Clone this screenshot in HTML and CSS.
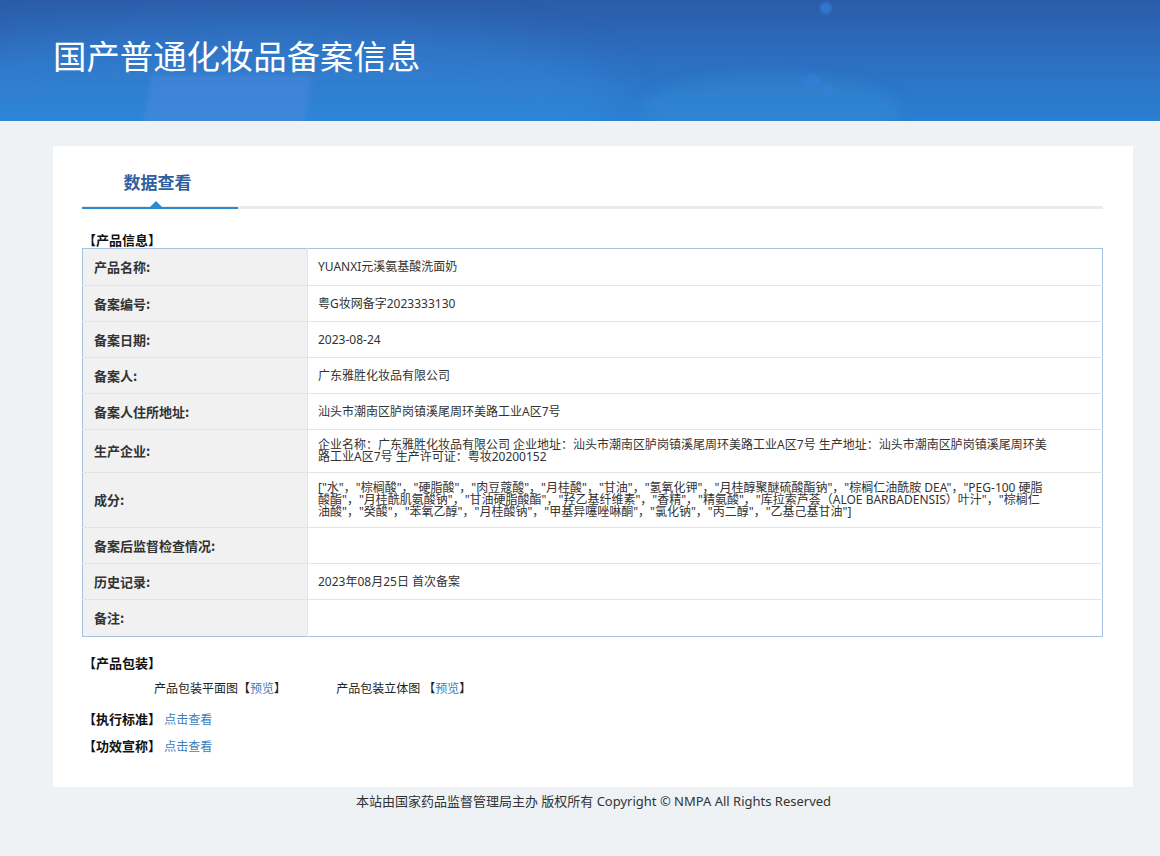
FILE: index.html
```html
<!DOCTYPE html>
<html lang="zh-CN">
<head>
    <meta charset="UTF-8">
    <meta name="viewport" content="width=device-width, initial-scale=1.0">
    <title>国产普通化妆品备案信息</title>
    <link rel="stylesheet" href="styles.css">
</head>
<body>
    <div class="banner">
        <div class="glow g1"></div>
        <div class="glow g2"></div>
        <div class="glow g3"></div>
        <div class="dot d1"></div>
        <div class="dot d2"></div>
        <div class="dot d3"></div>
        <h1>国产普通化妆品备案信息</h1>
    </div>

    <div class="card">
        <div class="tabs">
            <div class="tab active">数据查看</div>
        </div>

        <div class="sec-title">【产品信息】</div>
        <table class="info">
            <tr class="first">
                <th>产品名称:</th>
                <td>YUANXI元溪氨基酸洗面奶</td>
            </tr>
            <tr>
                <th>备案编号:</th>
                <td>粤G妆网备字2023333130</td>
            </tr>
            <tr>
                <th>备案日期:</th>
                <td>2023-08-24</td>
            </tr>
            <tr>
                <th>备案人:</th>
                <td>广东雅胜化妆品有限公司</td>
            </tr>
            <tr>
                <th>备案人住所地址:</th>
                <td>汕头市潮南区胪岗镇溪尾周环美路工业A区7号</td>
            </tr>
            <tr>
                <th>生产企业:</th>
                <td>企业名称：广东雅胜化妆品有限公司 企业地址：汕头市潮南区胪岗镇溪尾周环美路工业A区7号 生产地址：汕头市潮南区胪岗镇溪尾周环美路工业A区7号 生产许可证：粤妆20200152</td>
            </tr>
            <tr>
                <th>成分:</th>
                <td class="ingr">["水"，"棕榈酸"，"硬脂酸"，"肉豆蔻酸"，"月桂酸"，"甘油"，"氢氧化钾"，"月桂醇聚醚硫酸酯钠"，"棕榈仁油酰胺 DEA"，"PEG-100 硬脂酸酯"，"月桂酰肌氨酸钠"，"甘油硬脂酸酯"，"羟乙基纤维素"，"香精"，"精氨酸"，"库拉索芦荟（ALOE BARBADENSIS）叶汁"，"棕榈仁油酸"，"癸酸"，"苯氧乙醇"，"月桂酸钠"，"甲基异噻唑啉酮"，"氯化钠"，"丙二醇"，"乙基己基甘油"]</td>
            </tr>
            <tr>
                <th>备案后监督检查情况:</th>
                <td></td>
            </tr>
            <tr>
                <th>历史记录:</th>
                <td>2023年08月25日 首次备案</td>
            </tr>
            <tr>
                <th>备注:</th>
                <td></td>
            </tr>
        </table>

        <div class="extra">
            <div class="sec-title">【产品包装】</div>
            <div class="pack">
                <span class="pk">产品包装平面图【<a href="#">预览</a>】</span>
                <span class="pk">产品包装立体图 【<a href="#">预览</a>】</span>
            </div>
            <div class="line std"><b>【执行标准】</b> <a href="#">点击查看</a></div>
            <div class="line"><b>【功效宣称】</b> <a href="#">点击查看</a></div>
        </div>
    </div>

    <div class="footer">本站由国家药品监督管理局主办 版权所有 Copyright © NMPA All Rights Reserved</div>
</body>
</html>
```

FILE: styles.css
```css
*{
    margin:0;
    padding:0;
    box-sizing:border-box;
}
body{
    background:#eef2f5;
    font-family:"Noto Sans","Noto Sans CJK SC",sans-serif;
    color:#333;
    font-size:12px;
}
a{
    color:#3b7dbb;
    text-decoration:none;
}

/* banner */
.banner{
    position:relative;
    overflow:hidden;
    height:121px;
    background:linear-gradient(180deg,#2b5ca9 0%,#2d6dbf 45%,#2a80d1 100%);
    padding:34px 0 0 53px;
}
.banner h1{
    position:relative;
    color:#fff;
    font-family:"Noto Sans CJK SC",sans-serif;
    font-weight:400;
    font-size:33.4px;
    line-height:42px;
}
.glow{
    position:absolute;
    border-radius:50%;
}
.g1{
    left:-80px;
    top:20px;
    width:700px;
    height:160px;
    background:rgba(60,150,230,.25);
    filter:blur(20px);
}
.g2{
    left:145px;
    top:75px;
    width:160px;
    height:80px;
    border-radius:0;
    background:rgba(90,140,230,.35);
    transform:skewX(-10deg);
    filter:blur(2px);
}
.g3{
    left:640px;
    top:75px;
    width:260px;
    height:70px;
    background:rgba(60,150,220,.25);
    filter:blur(6px);
}
.dot{
    position:absolute;
    border-radius:50%;
    background:rgba(50,130,220,.7);
    filter:blur(1px);
}
.d1{left:820px;top:2px;width:12px;height:12px;}
.d2{left:805px;top:73px;width:16px;height:16px;background:rgba(50,130,220,.5);}
.d3{left:822px;top:84px;width:11px;height:11px;}

/* card */
.card{
    width:1080px;
    margin:25px 0 0 53px;
    background:#fff;
    padding:20px 30px 32px 29px;
}
.tabs{
    border-bottom:3px solid #ebebeb;
    height:43px;
}
.tab{
    position:relative;
    width:156px;
    height:43px;
    text-align:center;
    font-family:"Noto Sans CJK SC",sans-serif;
    font-size:17px;
    font-weight:700;
    color:#2f5f9f;
    line-height:32px;
    padding-right:5px;
    border-bottom:2px solid #2c8ad0;
    margin-bottom:-3px;
}
.tab::after{
    content:"";
    position:absolute;
    left:68px;
    bottom:0;
    border-left:6px solid transparent;
    border-right:6px solid transparent;
    border-bottom:6px solid #2c8ad0;
}

.sec-title{
    font-family:"Noto Sans CJK SC",sans-serif;
    font-weight:700;
    font-size:13px;
    color:#111;
    line-height:16px;
    margin:23px 0 0 1px;
}

/* info table */
.info{
    width:100%;
    border-collapse:collapse;
    border:1px solid #a6c2e0;
}
.info th,
.info td{
    border-bottom:1px solid #e4e4e4;
    padding:9px 10px;
    height:36px;
    vertical-align:middle;
    text-align:left;
}
.info tr:last-child th,
.info tr:last-child td{
    border-bottom:none;
    height:37px;
}
.info tr.first th,
.info tr.first td{
    height:37px;
}
.info th{
    width:225px;
    background:#f1f1f1;
    border-right:1px solid #e4e4e4;
    font-family:"Noto Sans CJK SC",sans-serif;
    font-size:13px;
    line-height:14px;
    font-weight:700;
    color:#333;
    padding-left:11px;
}
.info td{
    font-family:"Noto Sans","Noto Sans CJK SC",sans-serif;
    font-size:12px;
    line-height:12px;
    color:#333;
    padding-right:48px;
}
.info td.ingr{
    padding-right:56px;
}

/* packaging */
.extra .sec-title{
    margin-top:18px;
}
.pack{
    margin-top:10px;
    padding-left:72px;
    font-size:12px;
    line-height:16px;
    color:#222;
}
.pk{
    display:inline-block;
    width:179px;
}
.line{
    margin-top:10px;
    font-size:12px;
    line-height:16px;
}
.line.std{
    margin-top:14px;
}
.line b{
    font-family:"Noto Sans CJK SC",sans-serif;
    font-size:13px;
    color:#111;
    margin-left:1px;
}

.footer{
    text-align:center;
    font-size:13px;
    color:#333;
    line-height:28px;
    padding-left:27px;
}
```
